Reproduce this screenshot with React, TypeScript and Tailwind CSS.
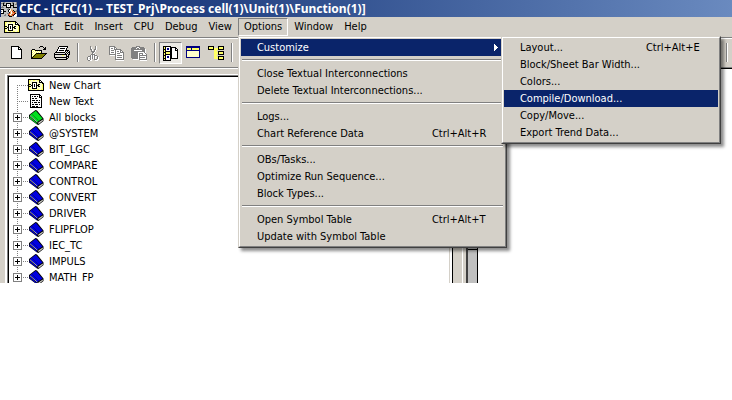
import { ReactNode } from "react";

const palette: Record<string, string> = {
  K: "#000000",
  W: "#ffffff",
  Y: "#ffff66",
  C: "#ffffcc",
  O: "#808000",
  L: "#e4e2dc",
  G: "#808080",
  S: "#c0c0c0",
  B: "#0000ff",
  N: "#000080",
  R: "#c83c14",
  T: "#f0a860",
};

const icons = {
  app: [
    "",
    "SSGGSSSSSSSGGSSG",
    "GGKGSKKKKKSGKSSG",
    "SSKSSKWWWKSSKSGG",
    "SSKKKKWGWKKKKSSS",
    "SGSSSKWWWKSSKSSS",
    "GGGSSKKKKKSSKKKK",
    "SSSSSSSGSSSSSSSS",
    "KKKSSSGGKWTSSSSS",
    "WWKSSSSKWWTTKSSG",
    "GWKKKSSKWTWRTKGG",
    "WWKSSSSSKTWTRRTS",
    "KKKSSSGGRTWTTRKS",
    "SSSSGSSRTWTRRKWW",
    "SSSGGSSKRTTRKWWW",
    "SSSSSSSSKKKSSWWS",
  ],
  chart: [
    "",
    "",
    "KKKKKKKKKKKK....",
    "KYYCCYYCCYYKK...",
    "KYCCCCCCCCCKWK..",
    "KYCCKKKKKCCKKKK.",
    "KYCCKWWWKCCCCCKK",
    "KKKCKWKWKCKKCCYK",
    "KYCKKWKWKKKCCCYK",
    "KKKCKWKWKCKKCCYK",
    "KYCCKWWWKCCCCCYK",
    "KYCCKKKKKCCCCCYK",
    "KYYCCYYCCYYCCYYK",
    "KKKKKKKKKKKKKKKK",
  ],
  text: [
    "",
    "..KKKKKKKKKK....",
    "..KWWWWWWWWKK...",
    "..KWKWKKWKWKWK..",
    "..KWWWWWWWWKKK..",
    "..KWKKWKKWWWWK..",
    "..KWWWWWWWWWWK..",
    "..KWKKKWKKWKWK..",
    "..KWWWWWWWWWWK..",
    "..KWKWKKKWKKWK..",
    "..KWWWWWWWWWWK..",
    "..KWKKWKKKWKWK..",
    "..KWWWWWWWWWWK..",
    "..KWKKKWKKWWWK..",
    "..KKKKKKKKKKKK..",
  ],
  newDoc: [
    "",
    "...KKKKKKKK.....",
    "...KWWWWWWKK....",
    "...KWWWWWWKWK...",
    "...KWWWWWWKKKK..",
    "...KWWWWWWWWWK..",
    "...KWWWWWWWWWK..",
    "...KWWWWWWWWWK..",
    "...KWWWWWWWWWK..",
    "...KWWWWWWWWWK..",
    "...KWWWWWWWWWK..",
    "...KWWWWWWWWWK..",
    "...KWWWWWWWWWK..",
    "...KKKKKKKKKKK..",
  ],
  open: [
    "",
    ".........KKK....",
    "........K...K.K.",
    ".............KK.",
    ".KKK........KKK.",
    "KYWYKKKKKKK.....",
    "KWYWYWYWYWK.....",
    "KYWYWYWYWYK.....",
    "KWYWYKKKKKKKKKKK",
    "KYWYKOOOOOOOOOK.",
    "KWYKOOOOOOOOOK..",
    "KYKOOOOOOOOOK...",
    "KKOOOOOOOOOK....",
    "KKKKKKKKKKK.....",
  ],
  print: [
    "",
    ".....KKKKKKKKK..",
    "....KWWWWWWWWK..",
    "....KWKKKKKWK...",
    "...KWWWWWWWWK...",
    "...KWKKKKKWKKKK.",
    "..KWWWWWWWWKLKLK",
    ".KKKKKKKKKKLKLKK",
    "KLLLLLLLLLLKLKLK",
    "KKKKKKKKKKKKKLKK",
    "KLLLLLLLYYLLKLK.",
    "KLLLLLLLLLLLKKK.",
    "KKKKKKKKKKKKKLK.",
    ".KLLLLLLLLLLKK..",
    "..KKKKKKKKKKK...",
  ],
  cut: [
    "",
    ".....G....GW....",
    ".....GW...GW....",
    ".....GW...GW....",
    ".....GGW.GGW....",
    "......GW.GW.....",
    "......GGGGW.....",
    ".......GGW......",
    ".......GW.......",
    "......GGGGW.....",
    ".....GWGWGGG....",
    "...GGGWGWGWWG...",
    "..GWWGWGWGW.GW..",
    "..GW.GWGWGW.GW..",
    "..GWWGW..GGGWW..",
    "...GGWW...WWW...",
  ],
  copy: [
    "",
    ".GGGGGG.........",
    ".GWWWWGG........",
    ".GWGGWGWG.......",
    ".GWWWWGGGGGGG...",
    ".GWGGGWGWWWWGG..",
    ".GWWWWWGWGGWGWG.",
    ".GWGGGWGWWWWGGGG",
    ".GWWWWWGWGGGWWWG",
    ".GGGGGGGWWWWWWWG",
    "..WWWWWGWGGGGGWG",
    ".......GWWWWWWWG",
    ".......GWGGGGGWG",
    ".......GWWWWWWWG",
    ".......GGGGGGGGG",
    "........WWWWWWWW",
  ],
  paste: [
    "",
    ".....GGGG.......",
    ".GGGGGWWGGGGG...",
    "GGGGGWGGWGGGGG..",
    "GGGGGGGGGGGGGGW.",
    "GGGWWWWWWWWGGGW.",
    "GGGGGGGGGGGGGGW.",
    "GGGGGGGWWWWWWGW.",
    "GGGGGGGWGGGGWWG.",
    "GGGGGGGWGWWGWWWG",
    "GGGGGGGWGGGGGGGG",
    "GGGGGGGWGWWWWWWG",
    "GGGGGGGWGGGGGGWG",
    ".GGGGGGWGWWWWWWG",
    "..WWWWWWGGGGGGGG",
    ".........WWWWWWW",
  ],
  catalog: [
    "",
    ".KKKKKKKK.......",
    ".KYKWWWWKKKKKK..",
    ".KYKWNNWKKWWWKK.",
    ".KKKWNNWKKWWWKWK",
    ".KYKWWWWKKWWWKKK",
    ".KYKKKKKKKWWWWWK",
    ".KKKYYYYKKWWWWWK",
    ".KYKYYYYKKWWWWWK",
    ".KYKKKKKKKWWWWWK",
    ".KKKWWWWKKWWWWWK",
    ".KYKWNNWKKWWWWWK",
    ".KYKWNNWKKWWWWWK",
    ".KKKWWWWKKKKKKKK",
    ".KYKWWWWK.......",
    ".KKKKKKKK.......",
  ],
  panel: [
    "",
    ".NNNNNNNNNNNNNN.",
    ".NNNNNNNNNNNNNN.",
    ".NYYYYNYYYYYYYN.",
    ".NYYYYNYYYYYYYN.",
    ".NNNNNNNNNNNNNN.",
    ".NCCCCCCCCCCCCN.",
    ".NCCCCCCCCCCCCN.",
    ".NCCCCCCCCCCCCN.",
    ".NCCCCCCCCCCCCN.",
    ".NCCCCCCCCCCCCN.",
    ".NCCCCCCCCCCCCN.",
    ".NNNNNNNNNNNNNN.",
  ],
  tree: [
    "",
    "KKKKKK....KKKKKK",
    "KYYYYK....KYYYYK",
    "KYYYYKYYYYKYYYYK",
    "KKKKKKYYYYKKKKKK",
    "......YYY.......",
    "......YYY.KKKKKK",
    "......YYYYKYYYYK",
    "......YYYYKYYYYK",
    "......YYY.KKKKKK",
    "......YYY.......",
    "......YYY.KKKKKK",
    "......YYYYKYYYYK",
    "......YYYYKYYYYK",
    "..........KKKKKK",
  ],
};

function PixelIcon({ name }: { name: keyof typeof icons }) {
  return (
    <svg width="16" height="16" viewBox="0 0 16 16" shapeRendering="crispEdges" className="shrink-0" aria-hidden="true">
      {icons[name].map((row, y) =>
        [...row].map((c, x) => (c === "." ? null : <rect key={`${x}-${y}`} x={x} y={y} width="1" height="1" fill={palette[c]} />))
      )}
    </svg>
  );
}

function Book({ color }: { color: string }) {
  return (
    <svg width="16" height="16" viewBox="0 0 16 16" className="shrink-0" aria-hidden="true">
      <path d="M1 6 L7.5 1 L9 1.5 L15.5 9.5 L15.5 12 L10.5 16 L9 15.5 L1 9.5 Z" fill="#000" />
      <path d="M1.8 6.2 L7.8 1.7 L14.5 9.6 L9.3 13 Z" fill={color} />
      <path d="M1.6 7.4 L9 14 L9 15 L1.6 9.2 Z" fill={color} />
      <path d="M10.4 13.4 L14.8 10.4 L14.8 11.8 L10.4 15.2 Z" fill="#d8d8d0" />
      <path d="M2 6.8 L9.4 13.2" stroke="#fff" strokeWidth="0.8" opacity="0.8" />
      <path d="M4 5.2 L10.8 11.8" stroke="#000" strokeWidth="0.6" opacity="0.5" />
    </svg>
  );
}

type MenuEntry = { label: string; keys?: string; active?: boolean; submenu?: MenuEntry[] } | null;

const customizeMenu: MenuEntry[] = [
  { label: "Layout...", keys: "Ctrl+Alt+E" },
  { label: "Block/Sheet Bar Width..." },
  { label: "Colors..." },
  { label: "Compile/Download...", active: true },
  { label: "Copy/Move..." },
  { label: "Export Trend Data..." },
];

const optionsMenu: MenuEntry[] = [
  { label: "Customize", active: true, submenu: customizeMenu },
  null,
  { label: "Close Textual Interconnections" },
  { label: "Delete Textual Interconnections..." },
  null,
  { label: "Logs..." },
  { label: "Chart Reference Data", keys: "Ctrl+Alt+R" },
  null,
  { label: "OBs/Tasks..." },
  { label: "Optimize Run Sequence..." },
  { label: "Block Types..." },
  null,
  { label: "Open Symbol Table", keys: "Ctrl+Alt+T" },
  { label: "Update with Symbol Table" },
];

function Menu({ entries, className }: { entries: MenuEntry[]; className: string }) {
  return (
    <div
      role="menu"
      className={`absolute z-10 border border-t-[#d4d0c8] border-l-[#d4d0c8] border-r-[#404040] border-b-[#404040] shadow-[3px_3px_3px_rgba(0,0,0,0.45)] ${className}`}
    >
      <div className="border border-t-white border-l-white border-r-[#808080] border-b-[#808080] bg-[#d4d0c8] p-px text-black">
        {entries.map((entry, i) =>
          entry ? (
            <div key={entry.label} className="relative">
              <button
                role="menuitem"
                className={`flex h-[17px] w-full items-center pl-4 text-left whitespace-nowrap ${entry.active ? "bg-[#0a246a] text-white" : ""}`}
              >
                <span className="grow">{entry.label}</span>
                {entry.keys && <span className="w-[72px]">{entry.keys}</span>}
                {entry.submenu && (
                  <svg width="4" height="7" viewBox="0 0 4 7" className="mr-[6px]" shapeRendering="crispEdges">
                    <path d="M0 0 L4 3.5 L0 7 Z" fill="currentColor" />
                  </svg>
                )}
              </button>
              {entry.submenu && <Menu entries={entry.submenu} className="-top-[3px] left-full -ml-[3px] w-[220px]" />}
            </div>
          ) : (
            <div key={i} className="h-[9px] pt-[3px]">
              <div className="mx-px h-[2px] border-t border-b border-t-[#808080] border-b-white" />
            </div>
          )
        )}
      </div>
    </div>
  );
}

function MenuBarItem({ children }: { children: ReactNode }) {
  return <button className="h-[18px] px-[5px]">{children}</button>;
}

function ToolButton({ icon, label, disabled, pressed }: { icon: keyof typeof icons; label: string; disabled?: boolean; pressed?: boolean }) {
  return (
    <button
      aria-label={label}
      aria-pressed={pressed}
      disabled={disabled}
      className={`h-[22px] w-[23px] shrink-0 border pl-[2px] ${
        pressed ? "border-t-[#808080] border-l-[#808080] border-r-white border-b-white bg-[#ebe9e4]" : "border-transparent"
      }`}
    >
      <PixelIcon name={icon} />
    </button>
  );
}

function ToolSeparator() {
  return (
    <div className="w-2 shrink-0 py-px pl-[3px]">
      <div className="h-[19px] w-[2px] border-r border-l border-r-white border-l-[#808080]" />
    </div>
  );
}

const blocks = ["All blocks", "@SYSTEM", "BIT_LGC", "COMPARE", "CONTROL", "CONVERT", "DRIVER", "FLIPFLOP", "IEC_TC", "IMPULS", "MATH_FP"];

function TreeRow({ label, icon, expandable, first }: { label: string; icon: ReactNode; expandable?: boolean; first?: boolean }) {
  const lines = (
    <svg width="15" height="16" viewBox="0 0 15 16" shapeRendering="crispEdges" aria-hidden="true">
      <path d={first ? "M4.5 8 V16" : "M4.5 0 V16"} stroke="#808080" strokeDasharray="1 1" />
      <path d="M4 8.5 H15" stroke="#808080" strokeDasharray="1 1" />
      {expandable && (
        <>
          <rect x="0.5" y="4.5" width="8" height="8" fill="#fff" stroke="#808080" />
          <path d="M2 8.5 H7 M4.5 6 V11" stroke="#000" />
        </>
      )}
    </svg>
  );
  return (
    <li className="flex h-4 items-center pl-1">
      {expandable ? <button aria-label={`Expand ${label}`}>{lines}</button> : lines}
      {icon}
      <span className="pt-[2px] pl-[5px]">{label}</span>
    </li>
  );
}

export default function App() {
  return (
    <div className="min-h-screen bg-white font-['DejaVu_Sans_Condensed','DejaVu_Sans',sans-serif] text-[11px] leading-4 text-black">
      <header className="flex h-[17px] items-center gap-[2px] overflow-hidden bg-linear-to-r from-[#0a246a] to-[#6a8abf] pl-px">
        <PixelIcon name="app" />
        <h1 className="font-['Noto_Sans',sans-serif] text-[12px] leading-4 font-bold whitespace-nowrap text-white">
          CFC - [CFC(1) -- TEST_Prj\Process cell(1)\Unit(1)\Function(1)]
        </h1>
      </header>

      <nav className="flex h-[21px] items-start gap-px border-b border-[#808080] bg-[#d4d0c8] pt-px pl-1">
        <div className="pt-px">
          <PixelIcon name="chart" />
        </div>
        <MenuBarItem>Chart</MenuBarItem>
        <MenuBarItem>Edit</MenuBarItem>
        <MenuBarItem>Insert</MenuBarItem>
        <MenuBarItem>CPU</MenuBarItem>
        <MenuBarItem>Debug</MenuBarItem>
        <MenuBarItem>View</MenuBarItem>
        <div className="relative">
          <button
            aria-expanded="true"
            className="h-[18px] border border-t-[#808080] border-l-[#808080] border-r-white border-b-white px-[5px]"
          >
            Options
          </button>
          <Menu entries={optionsMenu} className="top-full left-0 w-[269px]" />
        </div>
        <MenuBarItem>Window</MenuBarItem>
        <MenuBarItem>Help</MenuBarItem>
      </nav>

      <div className="flex h-[30px] items-start border-t border-b border-t-white border-b-[#808080] bg-[#d4d0c8] pt-[3px] pr-px pl-[5px]">
        <ToolButton icon="newDoc" label="New" />
        <ToolButton icon="open" label="Open" />
        <ToolButton icon="print" label="Print" />
        <ToolSeparator />
        <ToolButton icon="cut" label="Cut" disabled />
        <ToolButton icon="copy" label="Copy" disabled />
        <ToolButton icon="paste" label="Paste" disabled />
        <ToolSeparator />
        <ToolButton icon="catalog" label="Catalog" pressed />
        <ToolButton icon="panel" label="Sheet view" />
        <ToolButton icon="tree" label="Run sequence" />
        <ToolSeparator />
        <div className="ml-auto">
          <ToolSeparator />
        </div>
      </div>

      <main className="flex h-[215px] overflow-hidden">
        <div className="w-[450px] border-t border-white bg-[#d4d0c8] pt-[5px] pl-[5px]">
          <div className="h-full border-t border-r border-l-2 border-white border-r-[#d4d0c8]">
            <div className="h-full border-t border-l border-[#808080]">
              <ul className="h-full overflow-hidden border-t border-l border-black bg-white">
                <TreeRow label="New Chart" icon={<PixelIcon name="chart" />} first />
                <TreeRow label="New Text" icon={<PixelIcon name="text" />} />
                {blocks.map((b) => (
                  <TreeRow key={b} label={b} expandable icon={<Book color={b === "All blocks" ? "#00e020" : "#0000e0"} />} />
                ))}
              </ul>
            </div>
          </div>
        </div>
        <div className="w-[2px] bg-white" />
        <div className="w-[11px] border-r border-l border-r-white border-l-black bg-[#d4d0c8]" />
        <div className="w-[3px] bg-[#d4d0c8]" />
        <div className="w-3 border-r border-l-2 border-r-black border-l-[#404040] bg-[#c0c0c0] pt-[181px]">
          <div className="h-px bg-black" />
        </div>
        <div className="grow border-t border-black bg-white" />
      </main>
    </div>
  );
}
